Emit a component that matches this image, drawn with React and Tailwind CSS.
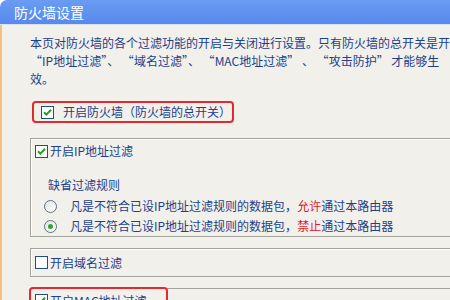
import React from 'react'

function CheckBox({ checked }) {
  return (
    <span className="inline-flex w-[13px] h-[13px] shrink-0 items-center justify-center border border-[#1c5180] bg-white">
      {checked && (
        <svg width="9" height="9" viewBox="0 0 9 9">
          <path d="M1 4.2 L3.4 6.6 L8 1.8" fill="none" stroke="#21a121" strokeWidth="2" />
        </svg>
      )}
    </span>
  )
}

function Radio({ checked }) {
  return (
    <span className="inline-flex w-[13px] h-[13px] shrink-0 items-center justify-center rounded-full border border-[#5d7185] bg-gradient-to-br from-[#e4e4de] to-white">
      {checked && <span className="w-[5px] h-[5px] rounded-full bg-[#2fa52f]" />}
    </span>
  )
}

// full-width quotation marks, as in the original bitmap font
function Q({ children }) {
  return <span className="[font-feature-settings:'fwid']">{children}</span>
}

export default function App() {
  return (
    <div
      lang="zh-CN"
      className="w-[450px] h-[300px] overflow-hidden bg-white text-[12px] leading-[18px] text-[#1d3f8c]"
      style={{ fontFamily: '"Noto Sans CJK SC", "Noto Sans", sans-serif' }}
    >
      {/* Title bar */}
      <div className="h-[24px] rounded-tl-[7px] bg-gradient-to-b from-[#6a9cf3] to-[#5689ec] flex items-center pl-[14px] text-[14px] text-white">
        防火墙设置
      </div>
      <div className="h-[1px] bg-[#d9e3f3]" />

      <div className="h-[275px] border-l-2 border-[#f4c27c] bg-[#f1f0ea] pl-[28px] pt-[9px]">
        <div className="whitespace-nowrap">
          <p>本页对防火墙的各个过滤功能的开启与关闭进行设置。只有防火墙的总开关是开启的</p>
          <p>
            <Q>“</Q>IP地址过滤<Q>”</Q>、 <Q>“</Q>域名过滤<Q>”</Q>、 <Q>“</Q>MAC地址过滤<Q>”</Q> 、 <Q>“</Q>攻击防护<Q>”</Q> 才能够生
          </p>
          <p>效。</p>
        </div>

        {/* Master switch */}
        <div className="mt-[13px] ml-[2px] w-[202px] h-[22px] rounded-[4px] border-2 border-[#e02a2e] flex items-center pl-[7px] gap-[9px] whitespace-nowrap">
          <CheckBox checked />
          <span>开启防火墙（防火墙的总开关）</span>
        </div>

        {/* IP filter */}
        <div className="mt-[15px] w-[440px] h-[99px] border border-[#a3a59d] shadow-[inset_1px_1px_0_#ffffff] pl-[4px] pt-[3px]">
          <div className="flex items-center gap-[2px] h-[18px] whitespace-nowrap">
            <CheckBox checked />
            <span>开启IP地址过滤</span>
          </div>
          <div className="pl-[13px] mt-[16px] whitespace-nowrap">缺省过滤规则</div>
          <div className="pl-[9px] mt-[3px] flex flex-col gap-[2px] whitespace-nowrap">
            <div className="flex items-center gap-[13px] h-[18px]">
              <Radio />
              <span>凡是不符合已设IP地址过滤规则的数据包，<span className="text-[#e0202a]">允许</span>通过本路由器</span>
            </div>
            <div className="flex items-center gap-[13px] h-[18px]">
              <Radio checked />
              <span>凡是不符合已设IP地址过滤规则的数据包，<span className="text-[#e0202a]">禁止</span>通过本路由器</span>
            </div>
          </div>
        </div>

        {/* Domain filter */}
        <div className="mt-[11px] w-[440px] h-[29px] border border-[#a3a59d] shadow-[inset_1px_1px_0_#ffffff] pl-[4px] flex items-center gap-[2px] whitespace-nowrap">
          <CheckBox />
          <span>开启域名过滤</span>
        </div>

        {/* MAC filter */}
        <div className="relative mt-[11px] w-[440px] h-[29px] border border-[#a3a59d] pl-[4px] pt-[5px] flex items-start gap-[2px] whitespace-nowrap">
          <CheckBox checked />
          <span className="leading-[14px]">开启MAC地址过滤</span>
          <div className="absolute left-[-2px] top-[-2px] w-[139px] h-[24px] rounded-[4px] border-2 border-[#e02a2e]" />
        </div>
      </div>
    </div>
  )
}
